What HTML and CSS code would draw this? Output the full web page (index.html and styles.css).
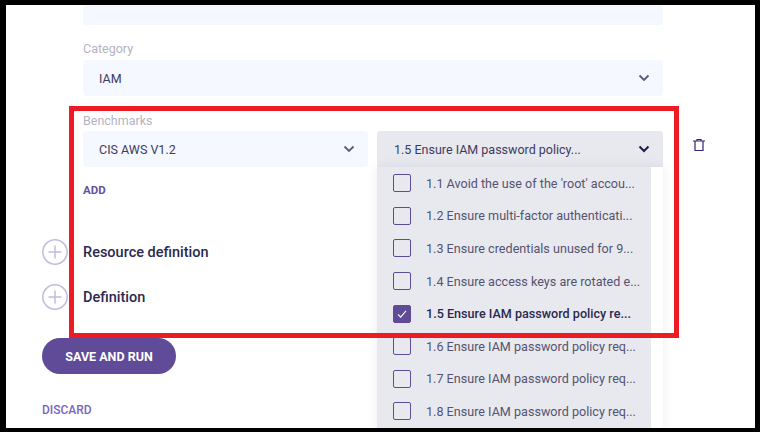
FILE: index.html
```html
<!DOCTYPE html>
<html lang="en">
<head>
<meta charset="UTF-8">
<title>Edit rule</title>
<link rel="stylesheet" href="styles.css">
</head>
<body>

<div class="frame">
  <div class="content">
    <div class="field field-top"></div>

    <label class="label label-category">Category</label>
    <div class="field select">
      <span>IAM</span>
      <svg class="chevron" viewBox="0 0 12 8"><path d="M1.5 1.500 6 6l4.500-4.500"/></svg>
    </div>

    <label class="label label-bench">Benchmarks</label>
    <div class="bench-row">
      <div class="field select">
        <span>CIS AWS V1.2</span>
        <svg class="chevron" viewBox="0 0 12 8"><path d="M1.5 1.500 6 6l4.500-4.500"/></svg>
      </div>
      <div class="multi">
        <div class="field select open">
          <span>1.5 Ensure IAM password policy...</span>
          <svg class="chevron" viewBox="0 0 12 8"><path d="M1.5 1.500 6 6l4.500-4.500"/></svg>
        </div>
        <div class="menu">
          <ul class="menu-list">
            <li><span class="check"></span>1.1 Avoid the use of the 'root' accou...</li>
            <li><span class="check"></span>1.2 Ensure multi-factor authenticati...</li>
            <li><span class="check"></span>1.3 Ensure credentials unused for 9...</li>
            <li><span class="check"></span>1.4 Ensure access keys are rotated e...</li>
            <li class="selected">
              <span class="check checked"><svg viewBox="0 0 18 18"><path d="M4.500 9.500 7.500 12.500 13.500 5.500"/></svg></span>
              1.5 Ensure IAM password policy re...
            </li>
            <li><span class="check"></span>1.6 Ensure IAM password policy req...</li>
            <li><span class="check"></span>1.7 Ensure IAM password policy req...</li>
            <li><span class="check"></span>1.8 Ensure IAM password policy req...</li>
          </ul>
        </div>
      </div>
      <svg class="trash" viewBox="0 0 12 12"><path d="M0 2h12M4 2V0.500h4V2M2 2v9.500h8V2"/></svg>
    </div>

    <a class="add">ADD</a>

    <div class="section section-first">
      <span class="plus"><svg viewBox="0 0 26 26"><circle cx="13" cy="13" r="12.200"/><path d="M13 6.500v13M6.500 13h13"/></svg></span>
      <h3>Resource definition</h3>
    </div>
    <div class="section section-second">
      <span class="plus"><svg viewBox="0 0 26 26"><circle cx="13" cy="13" r="12.200"/><path d="M13 6.500v13M6.500 13h13"/></svg></span>
      <h3>Definition</h3>
    </div>

    <button class="save">SAVE AND RUN</button>
    <a class="discard">DISCARD</a>
  </div>

  <div class="highlight"></div>
</div>

</body>
</html>
```
FILE: styles.css
```css
html, body {
  margin: 0;
  padding: 0;
  height: 100%;
  overflow: hidden;
}
body {
  font-family: 'Roboto', sans-serif;
  color: #2b2950;
  background: #000;
}
.frame {
  position: relative;
  box-sizing: border-box;
  width: 760px;
  height: 432px;
  border-style: solid;
  border-color: #000;
  border-width: 5px 5px 4px 6px;
  background: #fff;
  overflow: hidden;
}
.content {
  padding-left: 36px;
}
.field {
  background: #f5f8fe;
  border-radius: 4px;
  width: 580px;
  margin-left: 41px;
  box-sizing: border-box;
}
.field-top {
  height: 20px;
}
.label {
  display: block;
  margin-left: 41px;
  font-size: 12.5px;
  line-height: 14px;
  color: #b4b3c4;
}
.label-category {
  margin-top: 17px;
  margin-bottom: 4px;
}
.label-bench {
  margin-top: 18px;
  margin-bottom: 3px;
}
.select {
  display: flex;
  align-items: center;
  justify-content: space-between;
  height: 36px;
  padding: 0 13px 0 16px;
  font-size: 12.5px;
  color: #3d3b5e;
}
.chevron {
  width: 12px;
  height: 8px;
  fill: none;
  stroke: #5c5a78;
  stroke-width: 1.8;
}
.bench-row {
  display: flex;
  align-items: flex-start;
  margin-left: 41px;
}
.bench-row > .select {
  width: 285px;
  margin-left: 0;
}
.multi {
  position: relative;
  width: 286px;
  margin-left: 9px;
}
.multi .select {
  width: 286px;
  margin-left: 0;
  padding-left: 17px;
  background: #e8e9ef;
  border-radius: 4px 4px 0 0;
}
.multi .chevron {
  stroke: #1f1d45;
  stroke-width: 2;
}
.menu {
  position: absolute;
  top: 36px;
  left: 0;
  width: 286px;
  height: 262px;
  background: #fff;
  box-shadow: 0 0 12px rgba(40, 40, 80, 0.08);
}
.menu-list {
  list-style: none;
  margin: 0;
  padding: 0;
  width: 274px;
  height: 262px;
  background: #e8e9ef;
}
.menu-list li {
  display: flex;
  align-items: center;
  height: 32.6px;
  padding-left: 16px;
  font-size: 12.6px;
  color: #55536f;
  white-space: nowrap;
}
.menu-list li.selected {
  color: #2b2950;
  font-weight: 500;
}
.check {
  flex: none;
  box-sizing: border-box;
  width: 18px;
  height: 18px;
  margin-right: 15px;
  border: 1px solid #5f4b98;
  border-radius: 2px;
}
.check.checked {
  background: #5f4b98;
}
.check svg {
  display: block;
  width: 16px;
  height: 16px;
  fill: none;
  stroke: #fff;
  stroke-width: 1.2;
}
.trash {
  width: 12px;
  height: 12px;
  margin: 8px 0 0 30px;
  fill: none;
  stroke: #2b2675;
  stroke-width: 1.2;
}
.add {
  display: block;
  margin: 17px 0 0 41px;
  font-size: 11.5px;
  line-height: 13px;
  font-weight: 700;
  color: #6650a0;
}
.section {
  display: flex;
  align-items: center;
  height: 26px;
}
.section-first {
  margin-top: 42px;
}
.section-second {
  margin-top: 19px;
}
.plus {
  width: 26px;
  height: 26px;
  margin-right: 15px;
}
.plus svg {
  display: block;
  width: 26px;
  height: 26px;
  fill: none;
  stroke: #c1bcde;
  stroke-width: 1.5;
}
.section h3 {
  margin: 0;
  font-size: 14.5px;
  font-weight: 500;
  color: #2b2950;
}
.save {
  display: block;
  width: 134px;
  height: 36px;
  margin-top: 28px;
  border: none;
  border-radius: 18px;
  background: #5f4b98;
  color: #fff;
  font-family: inherit;
  font-size: 12.5px;
  font-weight: 700;
}
.discard {
  display: block;
  margin-top: 29px;
  font-size: 12px;
  line-height: 14px;
  font-weight: 500;
  color: #7a63c4;
}
/* red annotation drawn on top of the screenshot */
.highlight {
  position: absolute;
  left: 63px;
  top: 101px;
  width: 610px;
  height: 232px;
  box-sizing: border-box;
  border: 5px solid #ed1c24;
}
```
